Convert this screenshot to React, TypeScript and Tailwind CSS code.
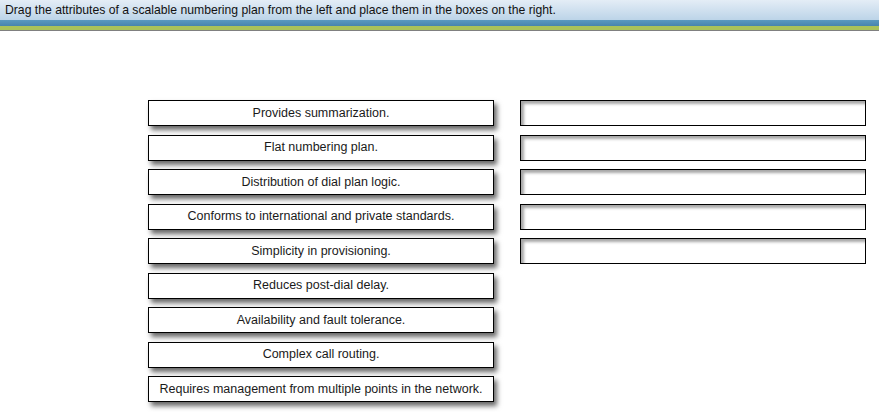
import React from 'react';

const ATTRIBUTES = [
  'Provides summarization.',
  'Flat numbering plan.',
  'Distribution of dial plan logic.',
  'Conforms to international and private standards.',
  'Simplicity in provisioning.',
  'Reduces post-dial delay.',
  'Availability and fault tolerance.',
  'Complex call routing.',
  'Requires management from multiple points in the network.',
];

const TARGET_COUNT = 5;

export default function App() {
  return (
    <div className="w-[879px] h-[412px] bg-white overflow-hidden" style={{ fontFamily: '"Liberation Sans", Arial, sans-serif' }}>
      {/* Instruction bar */}
      <div className="h-[20px] bg-gradient-to-b from-[#e4edf6] to-[#bcd4e8] flex items-center pl-[5px] text-[12.2px] text-[#111] leading-none">
        Drag the attributes of a scalable numbering plan from the left and place them in the boxes on the right.
      </div>
      <div className="h-[6px] bg-gradient-to-b from-[#5a99c0] to-[#4784ad]" />
      <div className="h-[4px] bg-[#a9c25a]" />
      <div className="h-[1px] bg-[#808080]" />

      <div className="flex pt-[69px] pl-[148px] gap-[26px]">
        {/* Draggable items */}
        <div className="flex flex-col gap-[8.5px] w-[346px]">
          {ATTRIBUTES.map((label) => (
            <div
              key={label}
              className="h-[26px] border border-black bg-white flex items-center justify-center text-[12.5px] text-[#1a1a1a] shadow-[3px_4px_5px_rgba(0,0,0,0.6)]"
            >
              {label}
            </div>
          ))}
        </div>

        {/* Drop targets */}
        <div className="flex flex-col gap-[8.5px] w-[346px]">
          {Array.from({ length: TARGET_COUNT }).map((_, i) => (
            <div
              key={i}
              className="h-[26px] border border-black bg-white shadow-[inset_3px_3px_3px_rgba(0,0,0,0.35)]"
            />
          ))}
        </div>
      </div>
    </div>
  );
}
